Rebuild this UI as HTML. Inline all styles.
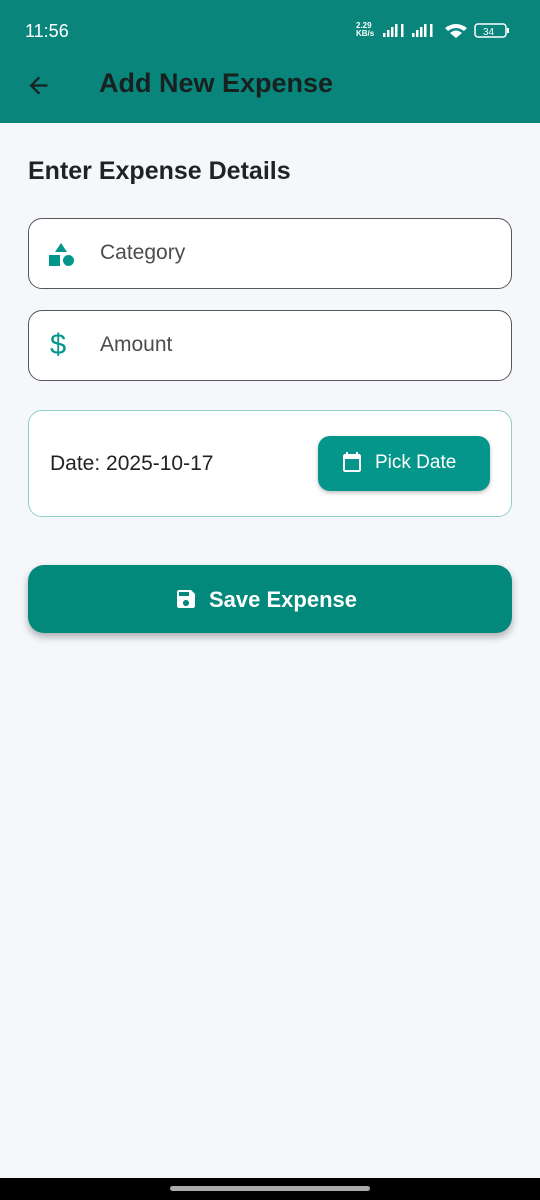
<!DOCTYPE html>
<html><head><meta charset="utf-8"><style>
*{margin:0;padding:0;box-sizing:border-box}
body{width:540px;height:1200px;background:#f5f7fb;font-family:"Liberation Sans",sans-serif;position:relative;overflow:hidden}
.bar{position:absolute;left:0;top:0;width:540px;height:123px;background:#0a857b}
.time{position:absolute;left:25px;top:21px;font-size:18px;color:#fff}
.title{position:absolute;left:99px;top:68px;font-size:27px;color:#17211f;font-weight:bold}
.h{position:absolute;left:28px;top:157px;font-size:25px;color:#1f2326;font-weight:bold}
.f{position:absolute;left:28px;width:484px;height:71px;border:1.5px solid #55585b;border-radius:14px;background:#fff}
.f span{position:absolute;left:71px;top:22px;font-size:21px;color:#4a4d50}
.card{position:absolute;left:28px;top:410px;width:484px;height:107px;border:1.2px solid #8fcfc8;border-radius:14px;background:#fff}
.card .d{position:absolute;left:21px;top:41px;font-size:21px;color:#222}
.pick{position:absolute;left:289px;top:25px;width:172px;height:55px;background:#04968a;border-radius:12px;box-shadow:0 2px 4px rgba(0,0,0,.25)}
.pick span{position:absolute;left:57px;top:16px;font-size:19px;color:#fff}
.save{position:absolute;left:28px;top:565px;width:484px;height:68px;background:#02897b;border-radius:16px;box-shadow:0 4px 8px rgba(0,0,0,.3)}
.save span{position:absolute;left:181px;top:22px;font-size:22px;color:#fff;font-weight:bold}
.nav{position:absolute;left:0;top:1178px;width:540px;height:22px;background:#000}
.nav i{position:absolute;left:170px;top:8px;width:200px;height:5px;border-radius:3px;background:#aaa}
</style></head><body>
<div class="bar">
<div class="time">11:56</div>
<div style="position:absolute;left:356px;top:22px;color:#fff;font-size:8px;line-height:8px;font-weight:bold">2.29<br>KB/s</div>
<svg style="position:absolute;left:383px;top:22px" width="130" height="18">
<g fill="#fff"><rect x="0" y="11" width="2.5" height="4"/><rect x="4" y="8" width="2.5" height="7"/><rect x="8" y="5" width="2.5" height="10"/><rect x="12" y="2" width="2.5" height="13"/><rect x="18" y="2" width="2.5" height="13"/>
<rect x="29" y="11" width="2.5" height="4"/><rect x="33" y="8" width="2.5" height="7"/><rect x="37" y="5" width="2.5" height="10"/><rect x="41" y="2" width="2.5" height="13"/><rect x="47" y="2" width="2.5" height="13"/>
<path d="M62 6 Q73 -2 84 6 L81 9 Q73 3 65 9Z M67 11 Q73 6 79 11 L73 16Z"/>
<rect x="92" y="2" width="31" height="13" rx="3" fill="none" stroke="#fff" stroke-width="1.5"/><rect x="124" y="6" width="2" height="5"/>
<text x="100" y="13" font-size="10" font-family="Liberation Sans">34</text></g></svg>
<svg style="position:absolute;left:25px;top:72px" width="27" height="27" viewBox="0 0 24 24"><path d="M20 11H7.8l5.6-5.6L12 4l-8 8 8 8 1.4-1.4L7.8 13H20z" fill="#17211f"/></svg>
<div class="title">Add New Expense</div>
</div>
<div class="h">Enter Expense Details</div>
<div class="f" style="top:218px">
<svg style="position:absolute;left:18px;top:22px" width="28" height="28" viewBox="0 0 28 28" fill="#04968a"><path d="M14 2L20 11H8Z"/><rect x="2" y="14" width="11" height="11"/><circle cx="21.5" cy="19.5" r="5.5"/></svg>
<span>Category</span></div>
<div class="f" style="top:310px">
<div style="position:absolute;left:21px;top:18px;font-size:29px;color:#04968a">$</div>
<span>Amount</span></div>
<div class="card"><div class="d">Date: 2025-10-17</div>
<div class="pick"><svg style="position:absolute;left:22px;top:15px" width="24" height="24" viewBox="0 0 24 24"><path d="M19 3h-1V1h-2v2H8V1H6v2H5c-1.1 0-2 .9-2 2v14c0 1.1.9 2 2 2h14c1.1 0 2-.9 2-2V5c0-1.1-.9-2-2-2zm0 16H5V8h14v11z" fill="#fff"/></svg><span>Pick Date</span></div></div>
<div class="save"><svg style="position:absolute;left:146px;top:22px" width="24" height="24" viewBox="0 0 24 24"><path d="M17 3H5c-1.1 0-2 .9-2 2v14c0 1.1.9 2 2 2h14c1.1 0 2-.9 2-2V7l-4-4zm-5 16c-1.7 0-3-1.3-3-3s1.3-3 3-3 3 1.3 3 3-1.3 3-3 3zm3-10H5V5h10v4z" fill="#fff"/></svg><span>Save Expense</span></div>
<div class="nav"><i></i></div>
</body></html>
